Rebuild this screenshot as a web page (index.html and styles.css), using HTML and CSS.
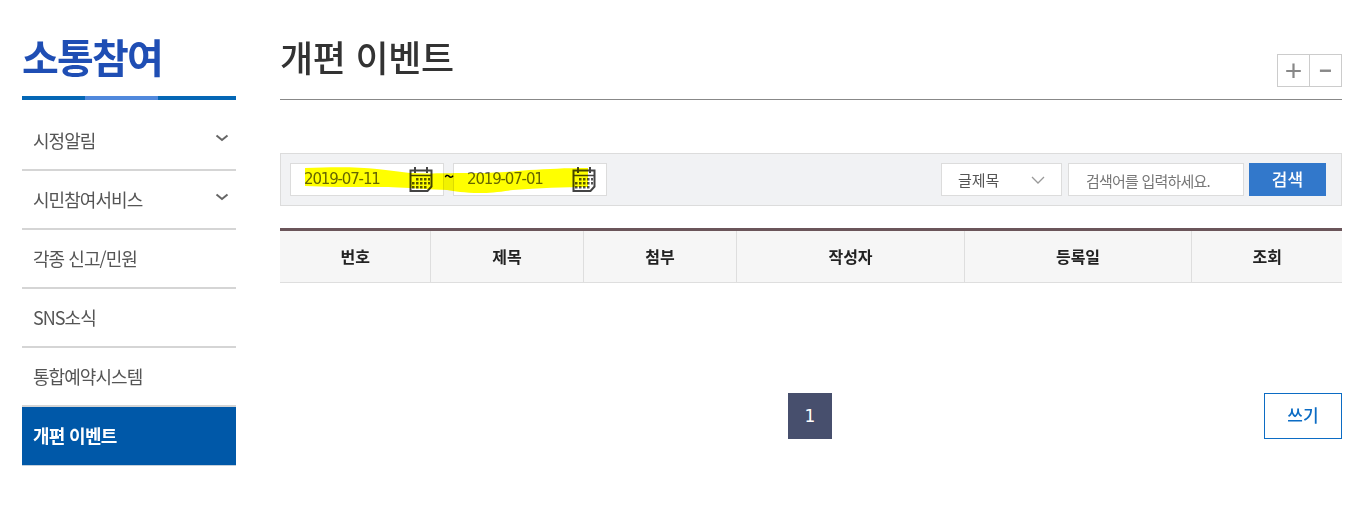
FILE: index.html
```html
<!DOCTYPE html>
<html lang="ko">
<head>
<meta charset="utf-8">
<title>개편 이벤트</title>
<link rel="stylesheet" href="styles.css">
</head>
<body>
<div class="page">
  <aside class="side">
    <h2 class="side-title">소통참여</h2>
    <div class="side-rule"><i></i><i class="mid"></i><i></i></div>
    <ul class="menu">
      <li class="menu-item"><span>시정알림</span><svg class="chev" width="14" height="8" viewBox="0 0 14 8"><path d="M1.500 1.500 7 6l5.500-4.500" fill="none" stroke="#666" stroke-width="2"/></svg></li>
      <li class="menu-item"><span>시민참여서비스</span><svg class="chev" width="14" height="8" viewBox="0 0 14 8"><path d="M1.500 1.500 7 6l5.500-4.500" fill="none" stroke="#666" stroke-width="2"/></svg></li>
      <li class="menu-item"><span>각종 신고/민원</span></li>
      <li class="menu-item"><span>SNS소식</span></li>
      <li class="menu-item"><span>통합예약시스템</span></li>
      <li class="menu-item active"><span>개편 이벤트</span></li>
    </ul>
  </aside>
  <main class="main">
    <header class="head">
      <h1 class="page-title">개편 이벤트</h1>
      <div class="zoom"><button class="zoom-btn">+</button><button class="zoom-btn minus">−</button></div>
    </header>
    <form class="search">
      <div class="dates">
        <div class="date"><span>2019-07-11</span>
          <svg class="cal" width="24" height="26" viewBox="0 0 24 26"><path d="M1.500 3.500h21v16l-4 4.500h-17z" fill="#fff" stroke="#444" stroke-width="2"/><path d="M1 8.500h22" stroke="#444" stroke-width="1.500"/><path d="M6 0v6M18 0v6" stroke="#444" stroke-width="2"/><g fill="#555"><rect x="7" y="11" width="2.500" height="2.500"/><rect x="11" y="11" width="2.500" height="2.500"/><rect x="15" y="11" width="2.500" height="2.500"/><rect x="19" y="11" width="2" height="2.500"/><rect x="3" y="15" width="2.500" height="2.500"/><rect x="7" y="15" width="2.500" height="2.500"/><rect x="11" y="15" width="2.500" height="2.500"/><rect x="15" y="15" width="2.500" height="2.500"/><rect x="19" y="15" width="2" height="2.500"/><rect x="3" y="19" width="2.500" height="2.500"/><rect x="7" y="19" width="2.500" height="2.500"/><rect x="11" y="19" width="2.500" height="2.500"/><rect x="15" y="19" width="2.500" height="2.500"/></g></svg>
        </div>
        <span class="tilde">~</span>
        <div class="date"><span>2019-07-01</span>
          <svg class="cal" width="24" height="26" viewBox="0 0 24 26"><path d="M1.500 3.500h21v16l-4 4.500h-17z" fill="#fff" stroke="#444" stroke-width="2"/><path d="M1 8.500h22" stroke="#444" stroke-width="1.500"/><path d="M6 0v6M18 0v6" stroke="#444" stroke-width="2"/><g fill="#555"><rect x="7" y="11" width="2.500" height="2.500"/><rect x="11" y="11" width="2.500" height="2.500"/><rect x="15" y="11" width="2.500" height="2.500"/><rect x="19" y="11" width="2" height="2.500"/><rect x="3" y="15" width="2.500" height="2.500"/><rect x="7" y="15" width="2.500" height="2.500"/><rect x="11" y="15" width="2.500" height="2.500"/><rect x="15" y="15" width="2.500" height="2.500"/><rect x="19" y="15" width="2" height="2.500"/><rect x="3" y="19" width="2.500" height="2.500"/><rect x="7" y="19" width="2.500" height="2.500"/><rect x="11" y="19" width="2.500" height="2.500"/><rect x="15" y="19" width="2.500" height="2.500"/></g></svg>
        </div>
        <svg class="marker" width="286" height="30" viewBox="0 0 286 30"><path d="M1 2 C30 1 55 1 73 3 C85 4 95 6 106 7 C125 8 140 7 163 7 C190 7 205 6 225 4 C245 3 260 2 284 2 L284 21 C260 21 235 22 209 24 C195 26 185 27 176 27 C160 27 150 25 143 24 C125 23 115 23 106 22 C90 21 75 21 69 21 C40 21 20 21 1 20 Z" fill="#ffff00"/></svg>
      </div>
      <div class="query">
        <div class="select"><span>글제목</span><svg width="14" height="8" viewBox="0 0 14 8"><path d="M1 1l6 6 6-6" fill="none" stroke="#999" stroke-width="1.300"/></svg></div>
        <div class="keyword">검색어를 입력하세요.</div>
        <button class="go" type="button">검색</button>
      </div>
    </form>
    <table class="board">
      <colgroup><col class="c1"><col class="c2"><col class="c3"><col class="c4"><col class="c5"><col class="c6"></colgroup>
      <thead><tr><th>번호</th><th>제목</th><th>첨부</th><th>작성자</th><th>등록일</th><th>조회</th></tr></thead>
    </table>
    <div class="foot">
      <a class="page-num">1</a>
      <a class="write">쓰기</a>
    </div>
  </main>
</div>
</body>
</html>
```
FILE: styles.css
```css
* { box-sizing: border-box; }
html, body { margin: 0; padding: 0; background: #fff; }
body { font-family: "Noto Sans CJK KR", "Noto Sans", sans-serif; color: #333; overflow: hidden; }
.page { display: flex; width: 1372px; height: 510px; padding-left: 22px; }
.side { width: 214px; flex: none; }
.side-title { margin: 0; height: 96px; padding-top: 27px; font-size: 40px; line-height: 58px; font-weight: 700; color: #1f4eb4; letter-spacing: -1.800px; }
.side-rule { display: flex; height: 4px; }
.side-rule i { flex: 63; background: #0467b5; }
.side-rule i.mid { flex: 73; background: #5088dc; }
.side-rule i:last-child { flex: 78; }
.menu { list-style: none; margin: 12px 0 0; padding: 0; }
.menu-item { height: 59px; display: flex; justify-content: space-between; align-items: center; padding: 0 7px 2px 11px; border-bottom: 2px solid #d5d5d5; font-size: 18px; letter-spacing: -0.950px; color: #555; }
.chev { margin-top: -4px; }
.menu-item.active { background: #0058a8; color: #fff; font-weight: 700; border-bottom: 1px solid #c4d0dc; height: 59px; padding-bottom: 3px; letter-spacing: -0.700px; }
.main { margin-left: 44px; width: 1062px; flex: none; }
.head { height: 100px; border-bottom: 1px solid #888; display: flex; justify-content: space-between; position: relative; }
.page-title { margin: 0; padding-top: 30px; font-size: 36px; line-height: 52px; font-weight: 500; color: #333; letter-spacing: -0.300px; }
.zoom { display: flex; padding-top: 54px; }
.zoom-btn { width: 33px; height: 33px; padding: 0; border: 1px solid #ccc; background: #fff; color: #888; font: 400 30px/29px "Liberation Sans", sans-serif; }
.zoom-btn.minus { font-weight: 700; font-size: 22px; }
.zoom-btn + .zoom-btn { margin-left: -1px; }
.search { margin-top: 53px; height: 53px; background: #f1f2f4; border: 1px solid #dcdcdc; padding: 9px 15px 0 9px; display: flex; justify-content: space-between; }
.dates { display: flex; position: relative; }
.date { width: 154px; height: 33px; background: #fff; border: 1px solid #dcdcdc; display: flex; justify-content: space-between; align-items: center; padding: 0 10px 1px 13px; font: 15px "DejaVu Sans", sans-serif; letter-spacing: -1.150px; color: #666; }
.cal { margin-top: 1px; }
.tilde { width: 9px; text-align: center; font-size: 18px; font-weight: 500; line-height: 24px; color: #000; position: relative; z-index: 2; }
.marker { position: absolute; left: 14px; top: 3px; mix-blend-mode: multiply; }
.query { display: flex; }
.select { width: 121px; height: 33px; background: #fff; border: 1px solid #dcdcdc; display: flex; justify-content: space-between; align-items: center; padding: 0 16px; font-size: 15px; letter-spacing: -0.100px; color: #555; }
.keyword { width: 176px; height: 33px; margin-left: 6px; background: #fff; border: 1px solid #dcdcdc; padding-left: 17px; font-size: 15px; line-height: 33px; letter-spacing: -0.800px; color: #777; }
.go { width: 77px; height: 33px; margin-left: 5px; border: 0; padding: 0 0 2px; background: #3278cb; color: #fff; font: 500 17px "Noto Sans CJK KR", sans-serif; }
.board { width: 100%; margin-top: 22px; border-collapse: collapse; table-layout: fixed; border-top: 3px solid #6b555a; }
.c1 { width: 150px; } .c2 { width: 153px; } .c3 { width: 153px; } .c4 { width: 228px; } .c5 { width: 227px; }
.board th { height: 53px; background: #f6f6f6; border-bottom: 1px solid #dedede; border-left: 1px solid #dedede; font-size: 16px; font-weight: 700; color: #222; padding: 0 0 2px 1px; }
.board th:first-child { border-left: 0; }
.foot { margin-top: 110px; height: 46px; position: relative; display: flex; justify-content: flex-end; }
.page-num { position: absolute; left: 508px; top: 0; width: 44px; height: 46px; background: #474f6d; color: #fff; text-align: center; font: 17px/46px "DejaVu Sans", sans-serif; }
.write { width: 78px; height: 46px; border: 1px solid #0c6cc4; color: #0c6cc4; text-align: center; font-size: 17px; font-weight: 500; line-height: 42px; }
```
